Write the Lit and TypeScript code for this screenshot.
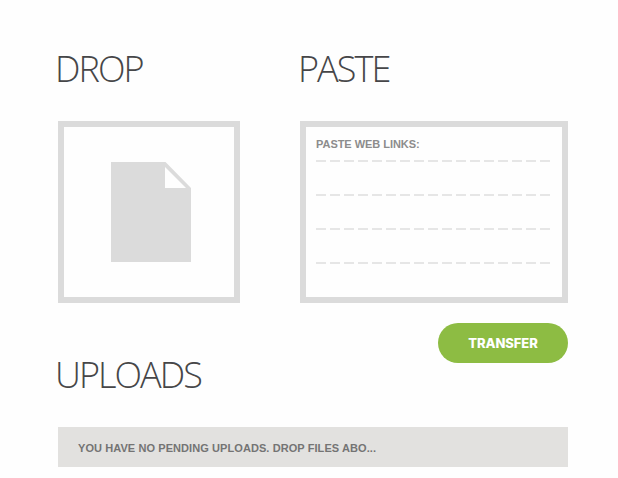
import { LitElement, html, css } from "lit";
import { customElement } from "lit/decorators.js";

@customElement("app-root")
export class AppRoot extends LitElement {
  static styles = css`
    :host {
      display: block;
      box-sizing: border-box;
      width: 618px;
      height: 478px;
      padding: 44px 50px 0 58px;
      background: #fefefe;
      overflow: hidden;
      font-family: "Liberation Sans", Arial, sans-serif;
    }
    .columns {
      display: grid;
      grid-template-columns: 182px 268px;
      column-gap: 60px;
    }
    h2 {
      margin: 0 0 0 -3px;
      height: 50px;
      font: 300 36px/50px "Open Sans", sans-serif;
      letter-spacing: -1.95px;
      color: #464648;
      white-space: nowrap;
    }
    .wide {
      margin-left: -2px;
    }
    .box {
      box-sizing: border-box;
      height: 182px;
      margin-top: 27px;
      border: 6px solid #dbdbdb;
      background: #fefefe;
    }
    .drop {
      display: flex;
      justify-content: center;
      padding: 35px 0 0 3px;
    }
    .drop svg {
      display: block;
    }
    .paste {
      padding: 10px 12px 0 10px;
    }
    .label {
      height: 23px;
      font-size: 11px;
      font-weight: 700;
      line-height: 15px;
      letter-spacing: -0.04px;
      color: #8c8c8c;
      white-space: nowrap;
    }
    .rule {
      height: 2px;
      margin-bottom: 32px;
      background: repeating-linear-gradient(90deg, #e6e6e6 0 10px, transparent 10px 14px);
    }
    button {
      display: block;
      width: 130px;
      height: 40px;
      margin: 20px 0 0 auto;
      padding: 0;
      border: 0;
      border-radius: 20px;
      background: #8dbc43;
      color: #fff;
      font: 800 13px/40px Inter, sans-serif;
      letter-spacing: -0.1px;
    }
    .uploads {
      margin-top: -13px;
    }
    .status {
      box-sizing: border-box;
      height: 40px;
      margin-top: 27px;
      padding-left: 20px;
      background: #e2e1df;
      color: #747474;
      font-size: 11px;
      font-weight: 700;
      line-height: 43px;
      letter-spacing: 0.08px;
      white-space: nowrap;
    }
  `;

  render() {
    return html`
      <div class="columns">
        <section>
          <h2>DROP</h2>
          <div class="box drop">
            <svg width="80" height="100" viewBox="0 0 80 100">
              <path fill="#dbdbdb" fill-rule="evenodd" d="M0 0H54.5L80 26V100H0ZM54 5V26H75Z" />
            </svg>
          </div>
        </section>
        <section>
          <h2 class="wide">PASTE</h2>
          <div class="box paste">
            <div class="label">PASTE WEB LINKS:</div>
            ${[0, 1, 2, 3].map(() => html`<div class="rule"></div>`)}
          </div>
          <button>TRANSFER</button>
        </section>
      </div>
      <section class="uploads">
        <h2>UPLOADS</h2>
        <div class="status">YOU HAVE NO PENDING UPLOADS. DROP FILES ABO...</div>
      </section>
    `;
  }
}
